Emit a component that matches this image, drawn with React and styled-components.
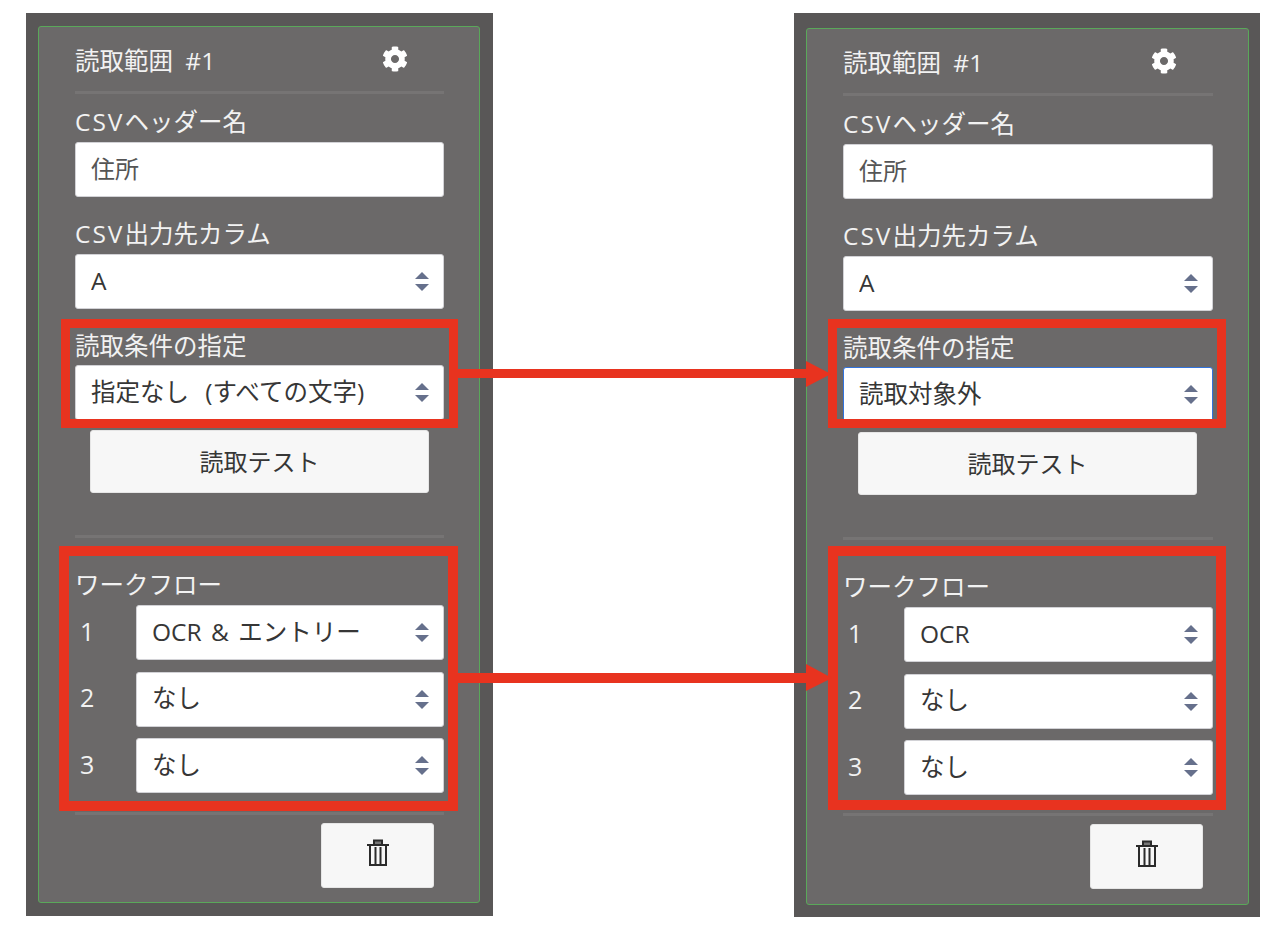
import styled, { createGlobalStyle } from "styled-components";
import { FaCog } from "react-icons/fa";

const GlobalStyle = createGlobalStyle`
  body {
    margin: 0;
    background: #fff;
    font-family: "Open Sans", "Noto Sans CJK JP", sans-serif;
  }
`;

const panels = [
  {
    id: "before",
    frameTop: 13,
    rest: 13,
    right: 13,
    width: 467,
    height: 903,
    condition: "指定なし (すべての文字)",
    conditionSpacing: 10,
    first: "OCR & エントリー",
    focused: false,
    conditionInset: "-13px -14px -8px -14px",
    workflowInset: "-25px -14px -18px -16px",
    lastRule: 19,
  },
  {
    id: "after",
    frameTop: 15,
    rest: 12,
    right: 11,
    width: 466,
    height: 904,
    condition: "読取対象外",
    conditionSpacing: 3,
    first: "OCR",
    focused: true,
    conditionInset: "-15px -13px -6px -15px",
    workflowInset: "-27px -13px -15px -15px",
    lastRule: 18,
  },
];

const SelectArrows = () => (
  <ArrowsIcon width="14" height="19" viewBox="0 0 14 19">
    <polygon points="7,0 14,7 0,7" fill="#66708c" />
    <polygon points="7,19 14,12 0,12" fill="#66708c" />
  </ArrowsIcon>
);

const SelectBox = ({ value, focused, spacing }) => (
  <SelectWrap>
    <Select $focused={focused} $spacing={spacing} defaultValue={value}>
      <option>{value}</option>
    </Select>
    <SelectArrows />
  </SelectWrap>
);

const TrashIcon = () => (
  <svg width="22" height="27" viewBox="0 0 22 27" fill="none" stroke="#2b2b2b" strokeWidth="2">
    <path d="M7 5V1.5h8V5" fill="#777" />
    <path d="M0 6h22" />
    <path d="M3 7v19h16V7" />
    <path d="M8.5 8v17M13.5 8v17" />
  </svg>
);

const Panel = ({ data }) => (
  <Outer $top={data.frameTop} $rest={data.rest} $right={data.right} $width={data.width} $height={data.height}>
    <Frame>
      <Head>
        <Title>読取範囲 #1</Title>
        <FaCog size={26} color="#fff" />
      </Head>
      <Rule />
      <FieldLabel $gap={14} $after={6}><Latin>CSV</Latin>ヘッダー名</FieldLabel>
      <TextInput defaultValue="住所" />
      <FieldLabel $gap={23} $after={6}><Latin>CSV</Latin>出力先カラム</FieldLabel>
      <SelectBox value="A" />
      <Highlight $inset={data.conditionInset} $border={9}>
        <FieldLabel>読取条件の指定</FieldLabel>
        <SelectBox value={data.condition} focused={data.focused} spacing={data.conditionSpacing} />
      </Highlight>
      <TestButton>読取テスト</TestButton>
      <Rule $above={42} />
      <Highlight $top={33} $inset={data.workflowInset} $border={10}>
        <FieldLabel $after={6}>ワークフロー</FieldLabel>
        <Steps>
          {[data.first, "なし", "なし"].map((step, i) => (
            <Step key={i}>
              <StepNo>{i + 1}</StepNo>
              <SelectBox value={step} />
            </Step>
          ))}
        </Steps>
      </Highlight>
      <Rule $above={data.lastRule} />
      <Actions>
        <TrashButton>
          <TrashIcon />
        </TrashButton>
      </Actions>
    </Frame>
  </Outer>
);

const App = () => (
  <Page>
    <GlobalStyle />
    {panels.map((p) => (
      <Panel key={p.id} data={p} />
    ))}
    <Connectors width="1274" height="928" viewBox="0 0 1274 928">
      <path d="M458 369H806V361L831 374 806 387V378H458Z" fill="#e8331f" />
      <path d="M458 673H806V664L832 678 806 691V683H458Z" fill="#e8331f" />
    </Connectors>
  </Page>
);

const Page = styled.div`
  position: relative;
  display: flex;
  align-items: flex-start;
  gap: 301px;
  height: 928px;
  padding: 13px 0 0 26px;
  box-sizing: border-box;
  overflow: hidden;
`;

const Connectors = styled.svg`
  position: absolute;
  top: 0;
  left: 0;
  pointer-events: none;
`;

const Outer = styled.div`
  display: flex;
  box-sizing: border-box;
  width: ${(p) => p.$width}px;
  height: ${(p) => p.$height}px;
  padding: ${(p) => p.$top}px ${(p) => p.$right}px ${(p) => p.$rest}px 12px;
  background: #595757;
`;

const Frame = styled.div`
  flex: 1;
  padding: 0 35px 0 36px;
  background: #6b6969;
  border: 1px solid #5aa85a;
  border-radius: 3px;
`;

const Head = styled.div`
  display: flex;
  align-items: center;
  justify-content: space-between;
  height: 64px;
  padding: 3px 36px 3px 0;
  box-sizing: border-box;
`;

const Title = styled.div`
  margin-top: 4px;
  color: #f2f2f2;
  font-size: 24.5px;
  line-height: 30px;
  word-spacing: 6px;
`;

const Rule = styled.div`
  height: 3px;
  margin-top: ${(p) => p.$above || 0}px;
  background: #767474;
`;

const FieldLabel = styled.div`
  color: #f2f2f2;
  font-size: 24.5px;
  line-height: 28px;
  margin-top: ${(p) => p.$gap || 0}px;
  margin-bottom: ${(p) => p.$after || 5}px;
`;

const Latin = styled.span`
  letter-spacing: 2px;
`;

const TextInput = styled.input`
  display: block;
  box-sizing: border-box;
  width: 100%;
  height: 55px;
  padding: 0 15px 4px;
  background: #fff;
  border: 1px solid #d2d2d6;
  border-radius: 3px;
  color: #555;
  font: 24px "Open Sans", "Noto Sans CJK JP", sans-serif;
`;

const SelectWrap = styled.div`
  position: relative;
  flex: 1;
  height: 55px;
`;

const Select = styled.select`
  appearance: none;
  display: block;
  box-sizing: border-box;
  width: 100%;
  height: 55px;
  padding: 0 15px 3px;
  background: #fff;
  border: 1px solid ${(p) => (p.$focused ? "#3273dc" : "#d2d2d6")};
  border-radius: 3px;
  color: #363636;
  font: 24.5px "Open Sans", "Noto Sans CJK JP", sans-serif;
  word-spacing: ${(p) => p.$spacing || 3}px;
`;

const ArrowsIcon = styled.svg`
  position: absolute;
  top: 18px;
  right: 15px;
  pointer-events: none;
`;

const Highlight = styled.div`
  position: relative;
  margin-top: ${(p) => p.$top || 23}px;

  &::after {
    content: "";
    position: absolute;
    inset: ${(p) => p.$inset};
    border: ${(p) => p.$border}px solid #e8331f;
    pointer-events: none;
  }
`;

const TestButton = styled.button`
  display: block;
  box-sizing: border-box;
  width: 339px;
  height: 63px;
  margin: 10px 0 0 15px;
  padding-bottom: 3px;
  background: #f7f7f7;
  border: 1px solid #e6e6e6;
  border-radius: 3px;
  color: #363636;
  font: 24px "Open Sans", "Noto Sans CJK JP", sans-serif;
`;

const Steps = styled.div`
  display: flex;
  flex-direction: column;
  gap: 11.5px;
`;

const Step = styled.div`
  display: flex;
  align-items: center;
`;

const StepNo = styled.div`
  width: 61px;
  padding: 0 0 4px 5px;
  box-sizing: border-box;
  color: #f2f2f2;
  font-size: 25px;
`;

const Actions = styled.div`
  display: flex;
  justify-content: flex-end;
  padding: 8px 10px 0 0;
`;

const TrashButton = styled.button`
  display: flex;
  align-items: center;
  justify-content: center;
  box-sizing: border-box;
  width: 113px;
  height: 65px;
  padding: 0 0 6px;
  background: #f7f7f7;
  border: 1px solid #e6e6e6;
  border-radius: 3px;
`;

export default App;
